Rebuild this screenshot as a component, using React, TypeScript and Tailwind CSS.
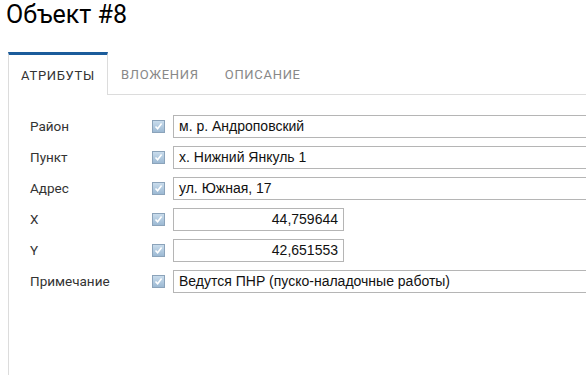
import React from "react";

function Check() {
  return (
    <span className="inline-flex h-[13px] w-[13px] shrink-0 items-center justify-center border border-[#8ba3ba] bg-gradient-to-b from-[#c9dcec] to-[#9cb9d3]">
      <svg width="9" height="9" viewBox="0 0 9 9">
        <path d="M1.5 4.5 L3.6 6.8 L7.6 1.6" fill="none" stroke="#ffffff" strokeWidth="1.6" />
      </svg>
    </span>
  );
}

const rows: { label: string; value: string; num?: boolean }[] = [
  { label: "Район", value: "м. р. Андроповский" },
  { label: "Пункт", value: "х. Нижний Янкуль 1" },
  { label: "Адрес", value: "ул. Южная, 17" },
  { label: "X", value: "44,759644", num: true },
  { label: "Y", value: "42,651553", num: true },
  { label: "Примечание", value: "Ведутся ПНР (пуско-наладочные работы)" },
];

export default function App() {
  return (
    <div className="h-[375px] w-[586px] overflow-hidden bg-white" style={{ fontFamily: "Roboto, 'Liberation Sans', sans-serif" }}>
      <div className="pl-[6px] pt-0 text-[25px] leading-[30px] text-black">Объект #8</div>
      <div className="mt-[22px] ml-[8px] flex h-[43px] items-stretch">
        <div className="flex w-[100px] shrink-0 items-center justify-center border-x border-t-[3px] border-x-[#dcdcdc] border-t-[#1b5c9b] bg-white pt-[1px] text-[13px] tracking-[0.7px] text-[#333]">
          АТРИБУТЫ
        </div>
        <div className="flex flex-1 items-center gap-[26px] border-b border-[#dcdcdc] pl-[13px] pt-[3px] text-[13px] tracking-[0.7px] text-[#888]">
          <span>ВЛОЖЕНИЯ</span>
          <span>ОПИСАНИЕ</span>
        </div>
      </div>
      <div className="ml-[8px] h-[300px] border-l border-[#dcdcdc] pt-[16px]">
        {rows.map((r) => (
          <div key={r.label} className="flex h-[31px] items-center">
            <div className="w-[143px] shrink-0 pl-[21px] text-[13.5px] text-[#333]">{r.label}</div>
            <Check />
            <div
              className={`ml-[8px] h-[23px] shrink-0 border border-[#b5b5b5] px-[5px] text-[14px] leading-[21px] text-[#111] ${r.num ? "w-[171px] text-right" : "w-[500px] text-left"}`}
              style={{ fontFamily: "'Liberation Sans', Arial, sans-serif" }}
            >
              {r.value}
            </div>
          </div>
        ))}
      </div>
    </div>
  );
}
